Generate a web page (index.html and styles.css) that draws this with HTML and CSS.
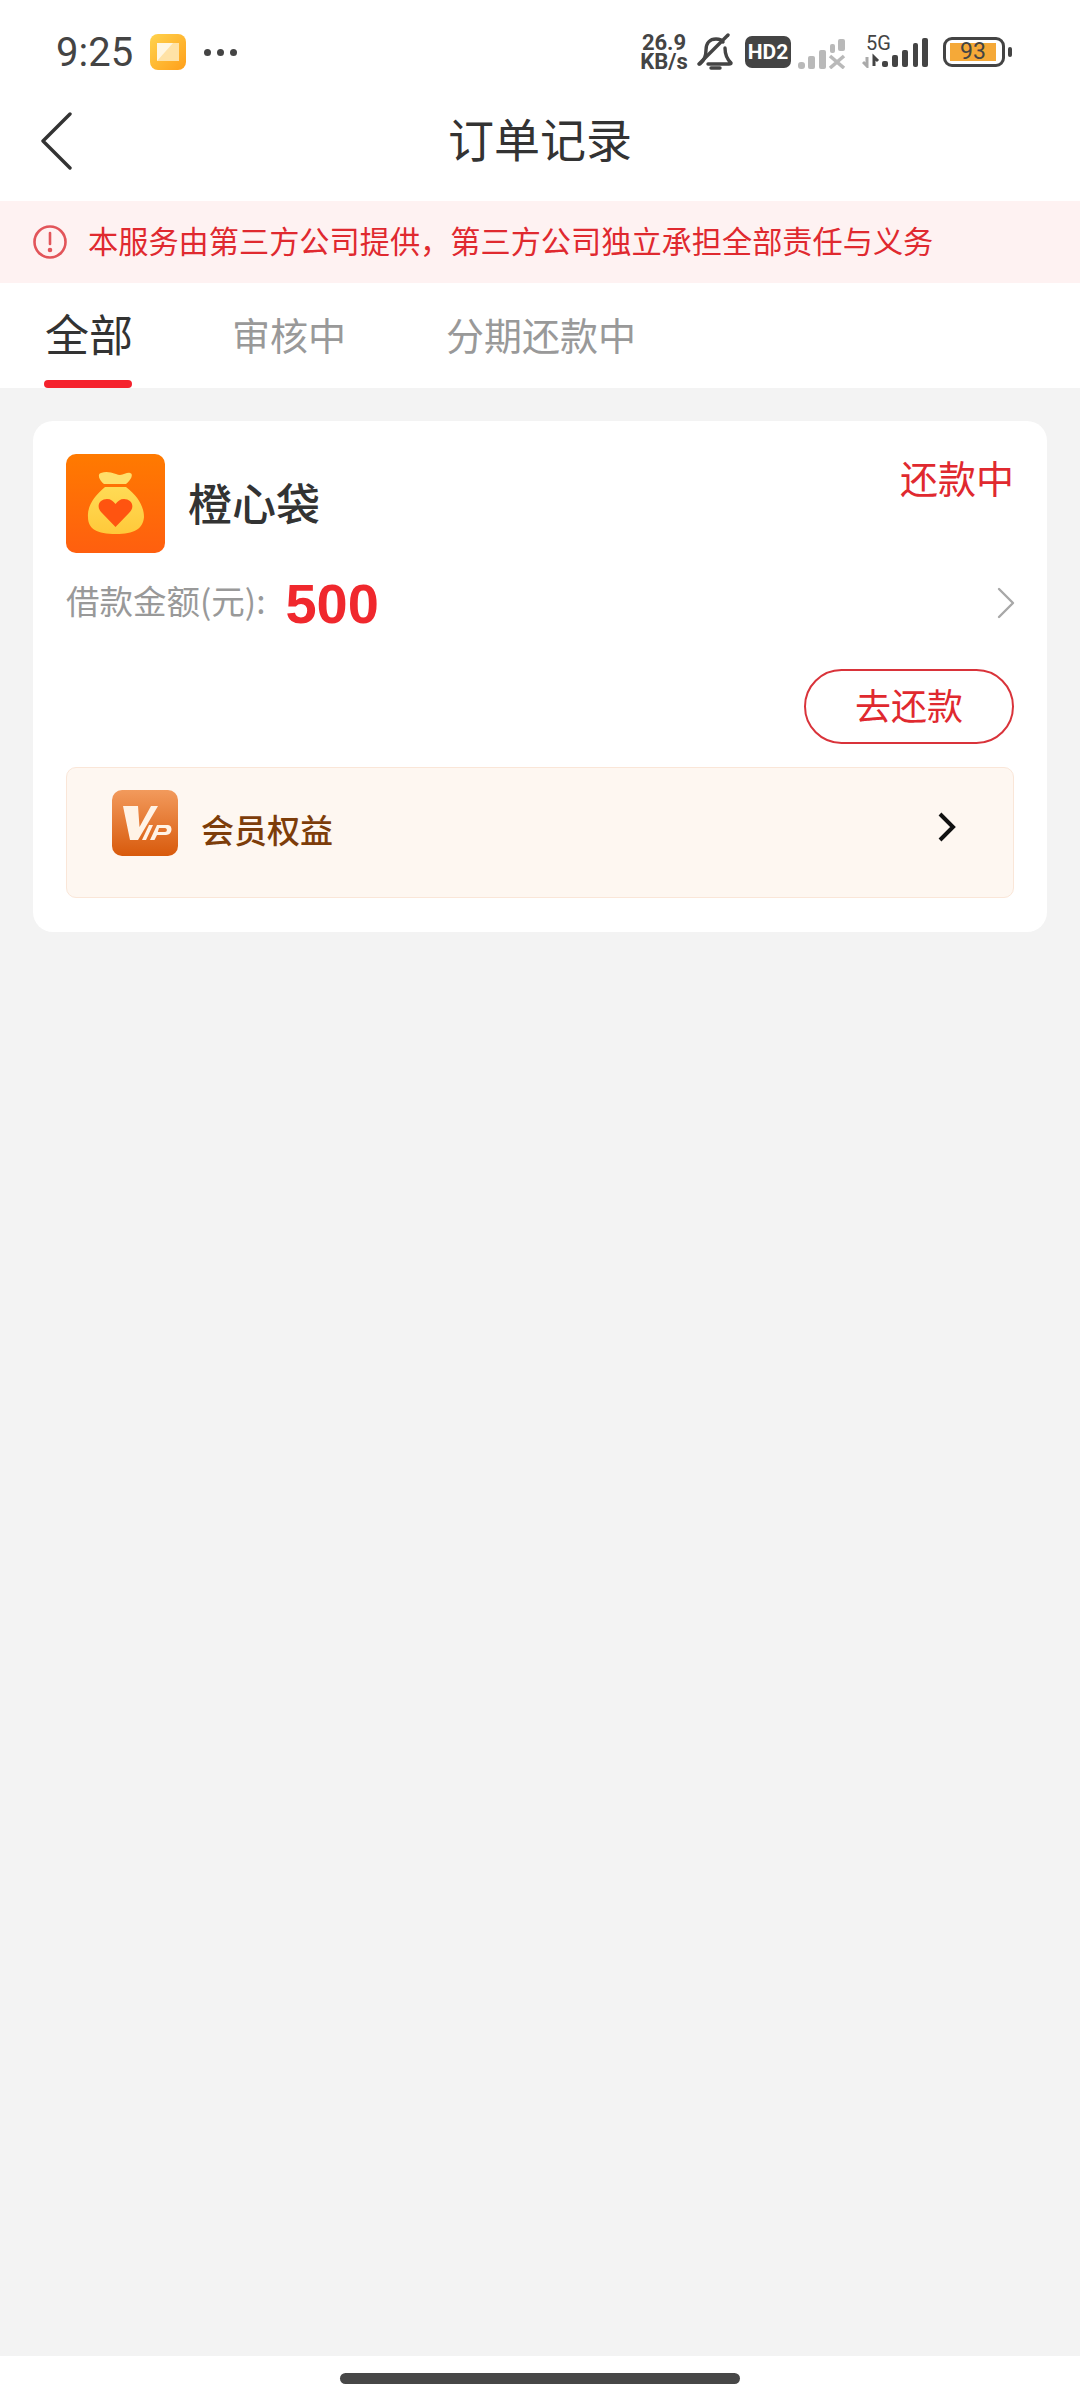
FILE: index.html
```html
<!DOCTYPE html>
<html lang="zh-CN">
<head>
  <meta charset="UTF-8">
  <meta name="viewport" content="width=device-width, initial-scale=1.0">
  <title>订单记录</title>
  <link rel="stylesheet" href="styles.css">
</head>
<body>
  <div class="page">
    <!-- status bar -->
    <div class="status-bar">
      <div class="status-left">
        <span class="clock">9:25</span>
        <svg class="app-dot" width="36" height="36" viewBox="0 0 36 36">
          <defs>
            <linearGradient id="dotBg" x1="0" y1="0" x2="1" y2="1">
              <stop offset="0" stop-color="#ffd34d"/>
              <stop offset="1" stop-color="#ff9f1a"/>
            </linearGradient>
          </defs>
          <rect width="36" height="36" rx="8" fill="url(#dotBg)"/>
          <rect x="7" y="9" width="22" height="18" fill="#ffe2a6"/>
          <path d="M7 27 L23 9 H7 Z" fill="#fff6e2"/>
        </svg>
        <span class="more-dots"><i></i><i></i><i></i></span>
      </div>
      <div class="status-right">
        <div class="net-speed">26.9<br>KB/s</div>
        <svg class="bell" width="36" height="38" viewBox="0 0 36 38" fill="none" stroke="#444" stroke-width="3.4" stroke-linecap="round" stroke-linejoin="round">
          <path d="M3 31 C8 27 9 23 9 17 C9 10 13 6 19 6 C22 6 25 7 26 9"/>
          <path d="M28 15 C28 22 30 26 34 30 C34 31 33 31 32 31 H11"/>
          <path d="M2 31 L31 2"/>
          <path d="M14 35 H23"/>
        </svg>
        <span class="hd-badge">HD2</span>
        <svg class="signal" width="48" height="34" viewBox="0 0 48 34" fill="#b9b9b9">
          <rect x="0" y="27" width="7" height="7" rx="3"/>
          <rect x="10" y="21" width="7" height="13" rx="2"/>
          <rect x="21" y="15" width="7" height="19" rx="2"/>
          <rect x="32" y="9" width="5" height="9" rx="2"/>
          <rect x="40" y="4" width="7" height="12" rx="2"/>
          <path d="M32 21 L46 33 M46 21 L32 33" stroke="#b9b9b9" stroke-width="3.6" fill="none"/>
        </svg>
        <div class="signal-5g">
          <span class="label-5g">5G</span>
          <svg width="66" height="32" viewBox="0 0 66 32" fill="#444">
            <path d="M5 21 V30 L1 26" stroke="#aaa" stroke-width="3" fill="none"/>
            <path d="M12 30 V21 L16 25" stroke="#444" stroke-width="3" fill="none"/>
            <rect x="20" y="25" width="6" height="6" rx="2"/>
            <rect x="30" y="19" width="6" height="12" rx="2"/>
            <rect x="40" y="14" width="6" height="17" rx="2"/>
            <rect x="51" y="7" width="5" height="24" rx="2"/>
            <rect x="60" y="2" width="6" height="29" rx="2"/>
          </svg>
        </div>
        <div class="battery">
          <div class="battery-body"><span class="battery-level">93</span></div>
          <div class="battery-tip"></div>
        </div>
      </div>
    </div>

    <!-- title -->
    <div class="nav-bar">
      <svg class="back" width="32" height="58" viewBox="0 0 32 58" fill="none" stroke="#333" stroke-width="3.4" stroke-linecap="round" stroke-linejoin="round">
        <path d="M30 2 L3 29 L30 56"/>
      </svg>
      <h1>订单记录</h1>
    </div>

    <div class="notice">
      <svg width="36" height="36" viewBox="0 0 36 36" fill="none" stroke="#e2555a" stroke-width="2.6">
        <circle cx="18" cy="18" r="15.5"/>
        <path d="M18 9 V20" stroke-linecap="round"/>
        <circle cx="18" cy="26" r="1" fill="#e2555a"/>
      </svg>
      <span class="notice-text">本服务由第三方公司提供，第三方公司独立承担全部责任与义务</span>
    </div>

    <div class="tabs">
      <div class="tab active">全部</div>
      <div class="tab">审核中</div>
      <div class="tab">分期还款中</div>
    </div>

    <div class="content">
      <div class="card">
        <div class="card-head">
          <svg class="logo" width="99" height="99" viewBox="0 0 99 99">
            <defs>
              <linearGradient id="logoBg" x1="0" y1="0" x2="0" y2="1">
                <stop offset="0" stop-color="#ff7a00"/>
                <stop offset="1" stop-color="#ff5f0f"/>
              </linearGradient>
              <linearGradient id="bagFill" x1="0" y1="0" x2="0" y2="1">
                <stop offset="0" stop-color="#ffdb55"/>
                <stop offset="1" stop-color="#ffc93a"/>
              </linearGradient>
            </defs>
            <rect width="99" height="99" rx="10" fill="url(#logoBg)"/>
            <path d="M35 19 C31 20 33 26 38 30 H60 C65 26 68 20 64 19 C60 18 56 23 50 20 C44 18 40 17 35 19 Z" fill="#ffdf6a"/>
            <path d="M39 33 H60 C72 42 78 53 78 63 C77 75 68 80 50 80 C31 80 22 75 22 63 C21 53 28 42 39 33 Z" fill="url(#bagFill)"/>
            <path d="M49.500 73 L36 59 C29 52 34 45 41 45 C45 45 47 47 49.500 50 C52 47 54 45 58 45 C65 45 70 52 63 59 Z" fill="#ff5410"/>
          </svg>
          <div class="card-name">橙心袋</div>
          <div class="card-status">还款中</div>
        </div>
        <div class="amount-row">
          <span class="amount-label">借款金额(元):</span>
          <span class="amount">500</span>
          <svg class="row-arrow" width="18" height="32" viewBox="0 0 18 32" fill="none" stroke="#a8a8a8" stroke-width="2.4" stroke-linecap="round" stroke-linejoin="round">
            <path d="M2 2 L16 16 L2 30"/>
          </svg>
        </div>
        <div class="action-row">
          <button class="repay-btn">去还款</button>
        </div>
        <div class="vip-box">
          <svg width="66" height="66" viewBox="0 0 66 66">
            <defs>
              <linearGradient id="vipBg" x1="0" y1="0" x2="0" y2="1">
                <stop offset="0" stop-color="#f29a5c"/>
                <stop offset="1" stop-color="#d85a0c"/>
              </linearGradient>
            </defs>
            <rect width="66" height="66" rx="10" fill="url(#vipBg)"/>
            <path d="M11 16 H26 L27.500 37 L39 16 H46 L26 50 H18 Z" fill="#fff3e6"/>
            <path d="M30 50 L37 35 H41 L34 50 Z" fill="#fff3e6"/>
            <path fill-rule="evenodd" d="M38 50 L45 35 H56 C61 35 61 45 54 45 H45 L42.500 50 Z M47 38 L45.800 42 H53 C55.500 42 55.500 38 53 38 Z" fill="#fff3e6"/>
          </svg>
          <span class="vip-text">会员权益</span>
          <svg class="vip-arrow" width="18" height="30" viewBox="0 0 18 30" fill="none" stroke="#111" stroke-width="4" stroke-linejoin="miter">
            <path d="M2 2 L15 15 L2 28"/>
          </svg>
        </div>
      </div>
    </div>

    <div class="home-bar"><div class="home-indicator"></div></div>
  </div>
</body>
</html>
```

FILE: styles.css
```css
* {
  box-sizing: border-box;
}
body {
  margin: 0;
  font-family: "Noto Sans CJK SC", "Noto Sans", sans-serif;
  background-color: #f3f3f3;
}
.page {
  width: 1080px;
  height: 2400px;
  display: flex;
  flex-direction: column;
  overflow: hidden;
}

/* status bar */
.status-bar {
  height: 90px;
  padding: 14px 68px 0 56px;
  display: flex;
  justify-content: space-between;
  align-items: center;
  background-color: #fff;
}
.status-left,
.status-right {
  display: flex;
  align-items: center;
}
.clock {
  font-family: Roboto, sans-serif;
  font-size: 40px;
  color: #444;
  width: 94px;
}
.more-dots {
  display: flex;
  gap: 6px;
  margin-left: 18px;
}
.more-dots i {
  width: 7px;
  height: 7px;
  border-radius: 50%;
  background-color: #444;
}
.net-speed {
  width: 48px;
  font-family: Roboto, sans-serif;
  font-weight: 700;
  font-size: 22px;
  line-height: 19px;
  color: #444;
  text-align: center;
  white-space: nowrap;
}
.bell {
  margin-left: 9px;
}
.hd-badge {
  margin-left: 12px;
  width: 46px;
  height: 32px;
  border-radius: 7px;
  background-color: #444;
  color: #fff;
  font-family: Roboto, sans-serif;
  font-weight: 700;
  font-size: 21px;
  line-height: 32px;
  text-align: center;
}
.signal {
  margin-left: 7px;
}
.signal-5g {
  position: relative;
  margin-left: 16px;
  height: 32px;
}
.label-5g {
  position: absolute;
  left: 4px;
  top: -3px;
  font-family: Roboto, sans-serif;
  font-size: 20px;
  line-height: 20px;
  color: #444;
}
.battery {
  display: flex;
  align-items: center;
  margin-left: 15px;
}
.battery-body {
  width: 62px;
  height: 30px;
  padding: 3px 6px 3px 4px;
  border: 3px solid #444;
  border-radius: 9px;
}
.battery-level {
  display: block;
  height: 18px;
  background-color: #f5a938;
  font-family: Roboto, sans-serif;
  font-size: 23px;
  line-height: 18px;
  text-align: center;
  color: #444;
}
.battery-tip {
  width: 4px;
  height: 10px;
  margin-left: 3px;
  border-radius: 2px;
  background-color: #444;
}

/* title */
.nav-bar {
  position: relative;
  height: 111px;
  padding-bottom: 18px;
  display: flex;
  align-items: center;
  justify-content: center;
  background-color: #fff;
}
.back {
  position: absolute;
  left: 40px;
  top: 22px;
}
.nav-bar h1 {
  margin: 0;
  font-size: 46px;
  font-weight: 400;
  color: #333;
}

.notice {
  height: 82px;
  padding-left: 32px;
  display: flex;
  align-items: center;
  gap: 20px;
  background-color: #fef2f2;
  color: #e0292f;
  font-size: 30.200px;
}
.notice-text {
  padding-bottom: 5px;
}

.tabs {
  height: 105px;
  padding-left: 33px;
  display: flex;
  background-color: #fff;
}
.tab {
  position: relative;
  padding-top: 23px;
  font-size: 38px;
  color: #999;
  margin-right: 100px;
}
.tab.active {
  padding: 18px 0 0 12px;
  width: 88px;
  margin-right: 111px;
  font-size: 44px;
  color: #333;
  white-space: nowrap;
}
.tab.active::after {
  content: "";
  position: absolute;
  left: 11px;
  bottom: 0;
  width: 88px;
  height: 8px;
  border-radius: 4px;
  background-color: #f5222d;
}

.content {
  flex: 1;
  padding: 33px 33px 0;
}
.card {
  height: 511px;
  padding: 33px;
  background-color: #fff;
  border-radius: 20px;
}
.card-head {
  display: flex;
  align-items: flex-start;
}
.card-name {
  margin: 16px 0 0 23px;
  flex: 1;
  font-size: 44px;
  font-weight: 500;
  color: #333;
}
.card-status {
  line-height: 45px;
  font-size: 38px;
  color: #e0292f;
}
.amount-row {
  height: 66px;
  margin-top: 17px;
  display: flex;
  align-items: center;
}
.amount-label {
  margin-bottom: 8px;
  font-size: 33.500px;
  color: #999;
}
.amount {
  margin-left: 20px;
  flex: 1;
  font-family: "Liberation Sans", Arial, sans-serif;
  font-weight: 700;
  font-size: 56px;
  color: #f0282d;
}
.row-arrow {
  margin-right: -1px;
}
.action-row {
  margin-top: 33px;
  display: flex;
  justify-content: flex-end;
}
.repay-btn {
  width: 210px;
  height: 75px;
  padding: 0 0 5px;
  border: 2.500px solid #d9333a;
  border-radius: 38px;
  background-color: #fff;
  font-family: inherit;
  font-size: 36px;
  color: #e0292f;
}
.vip-box {
  height: 131px;
  margin-top: 23px;
  padding: 22px 57px 0 45px;
  display: flex;
  align-items: flex-start;
  border: 1px solid #fae6d8;
  border-radius: 10px;
  background-color: #fef7f1;
}
.vip-text {
  margin: 15px 0 0 23px;
  flex: 1;
  font-size: 33px;
  font-weight: 500;
  color: #7d3d0a;
}
.vip-arrow {
  margin-top: 22px;
}

.home-bar {
  height: 44px;
  padding-top: 17px;
  display: flex;
  justify-content: center;
  background-color: #fff;
}
.home-indicator {
  width: 400px;
  height: 11px;
  border-radius: 6px;
  background-color: #474747;
}
```
